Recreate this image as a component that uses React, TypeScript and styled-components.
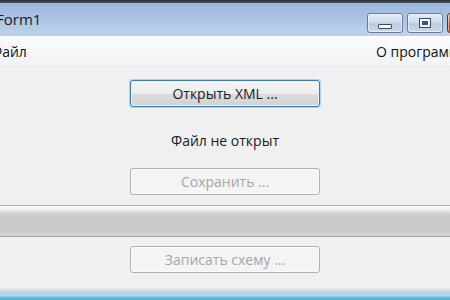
import React from "react";
import styled, { createGlobalStyle } from "styled-components";

const GlobalStyle = createGlobalStyle`
  html, body {
    margin: 0;
    padding: 0;
    width: 450px;
    height: 300px;
    overflow: hidden;
    background: #f0f0f0;
  }
  * {
    box-sizing: border-box;
  }
`;

const Window = styled.div`
  width: 450px;
  height: 300px;
  display: flex;
  flex-direction: column;
  font-family: "Open Sans", "Noto Sans", sans-serif;
  font-size: 14px;
  color: #1e1e1e;
  overflow: hidden;
`;

const TopEdge = styled.div`
  height: 3px;
  background: linear-gradient(#2a2d31, #4a5360);
`;

const TitleBar = styled.div`
  height: 33px;
  display: flex;
  align-items: flex-start;
  background: linear-gradient(#99b5d9, #b1c9e6 60%, #bdd2eb);
`;

const Title = styled.div`
  margin-left: -4px;
  margin-top: 6px;
  font-size: 15px;
  color: #1b1b1b;
  flex: 1;
`;

const Controls = styled.div`
  display: flex;
  gap: 4px;
  margin-top: 10px;
  margin-right: -33px;
`;

const CtrlButton = styled.div<{ $close?: boolean }>`
  width: 36px;
  height: 20px;
  border: 1px solid ${(p) => (p.$close ? "#6b2a20" : "#6b7d96")};
  border-radius: 3px;
  background: ${(p) =>
    p.$close
      ? "linear-gradient(#e8a493, #cf4b33 50%, #c2321c)"
      : "linear-gradient(#e4ecf6, #cbd9eb 50%, #b9cbe2 51%, #c9d9ec)"};
  box-shadow: inset 0 0 0 1px rgba(255, 255, 255, 0.55);
  display: flex;
  align-items: center;
  justify-content: center;
`;

const MinGlyph = styled.div`
  width: 14px;
  height: 5px;
  margin-top: 6px;
  background: #f4f6f8;
  border: 1px solid #3e4a5a;
  border-radius: 1px;
`;

const MaxGlyph = styled.div`
  width: 12px;
  height: 10px;
  border: 1px solid #3e4a5a;
  background: #f4f6f8;
  display: flex;
  align-items: center;
  justify-content: center;
  &::after {
    content: "";
    width: 6px;
    height: 4px;
    background: #4a5668;
  }
`;

const MenuBar = styled.div`
  height: 31px;
  display: flex;
  align-items: center;
  justify-content: space-between;
  background: linear-gradient(#fafbfd, #f1f3f6);
  border-bottom: 1px solid #e6e9ee;
`;

const MenuItem = styled.span<{ $left?: number; $right?: number }>`
  margin-left: ${(p) => p.$left ?? 0}px;
  margin-right: ${(p) => p.$right ?? 0}px;
  white-space: nowrap;
  color: #111;
`;

const Content = styled.div`
  flex: 1;
  display: flex;
  flex-direction: column;
  align-items: center;
  background: #f0f0f0;
`;

const Button = styled.button<{ $focused?: boolean }>`
  width: 190px;
  height: 27px;
  border-radius: 3px;
  font-family: inherit;
  font-size: 14px;
  padding: 0;
  border: 1px solid ${(p) => (p.$focused ? "#3d7bad" : "#b0b0b0")};
  color: ${(p) => (p.$focused ? "#1a1a1a" : "#a6a6a6")};
  background: ${(p) =>
    p.$focused
      ? "linear-gradient(#f7f7f7, #ececec 50%, #dcdcdc 51%, #d2d2d2)"
      : "#f4f4f4"};
  box-shadow: ${(p) =>
    p.$focused
      ? "0 0 0 1px #a9d3ee, inset 0 0 0 1px #e8f4fb"
      : "inset 0 0 0 1px #fbfbfb"};
`;

const OpenButton = styled(Button)`
  margin-top: 13px;
`;

const StatusText = styled.div`
  margin-top: 24px;
  margin-bottom: 18px;
  color: #1a1a1a;
`;

const Splitter = styled.div`
  align-self: stretch;
  height: 32px;
  margin-top: 10px;
  margin-bottom: 9px;
  border-top: 1px solid #a9a9a9;
  border-bottom: 1px solid #a6a6a6;
  background: linear-gradient(
    #ffffff,
    #f2f2f2 3px,
    #dcdcdc 6px,
    #cacaca 10px,
    #c9c9c9 24px,
    #d3d3d3 29px
  );
`;

const BottomEdge = styled.div`
  height: 12px;
  background: linear-gradient(
    #e3e6ea,
    #e3e6ea 2px,
    #b9d5ef 3px,
    #b7d3ee 8px,
    #5ec3d9 9px,
    #4cb8d4
  );
`;

export default function App() {
  return (
    <Window>
      <GlobalStyle />
      <TopEdge />
      <TitleBar>
        <Title>Form1</Title>
        <Controls>
          <CtrlButton>
            <MinGlyph />
          </CtrlButton>
          <CtrlButton>
            <MaxGlyph />
          </CtrlButton>
          <CtrlButton $close />
        </Controls>
      </TitleBar>
      <MenuBar>
        <MenuItem $left={-9}>Файл</MenuItem>
        <MenuItem $right={-17}>О программе</MenuItem>
      </MenuBar>
      <Content>
        <OpenButton $focused>Открыть XML ...</OpenButton>
        <StatusText>Файл не открыт</StatusText>
        <Button disabled>Сохранить ...</Button>
        <Splitter />
        <Button disabled>Записать схему ...</Button>
      </Content>
      <BottomEdge />
    </Window>
  );
}
